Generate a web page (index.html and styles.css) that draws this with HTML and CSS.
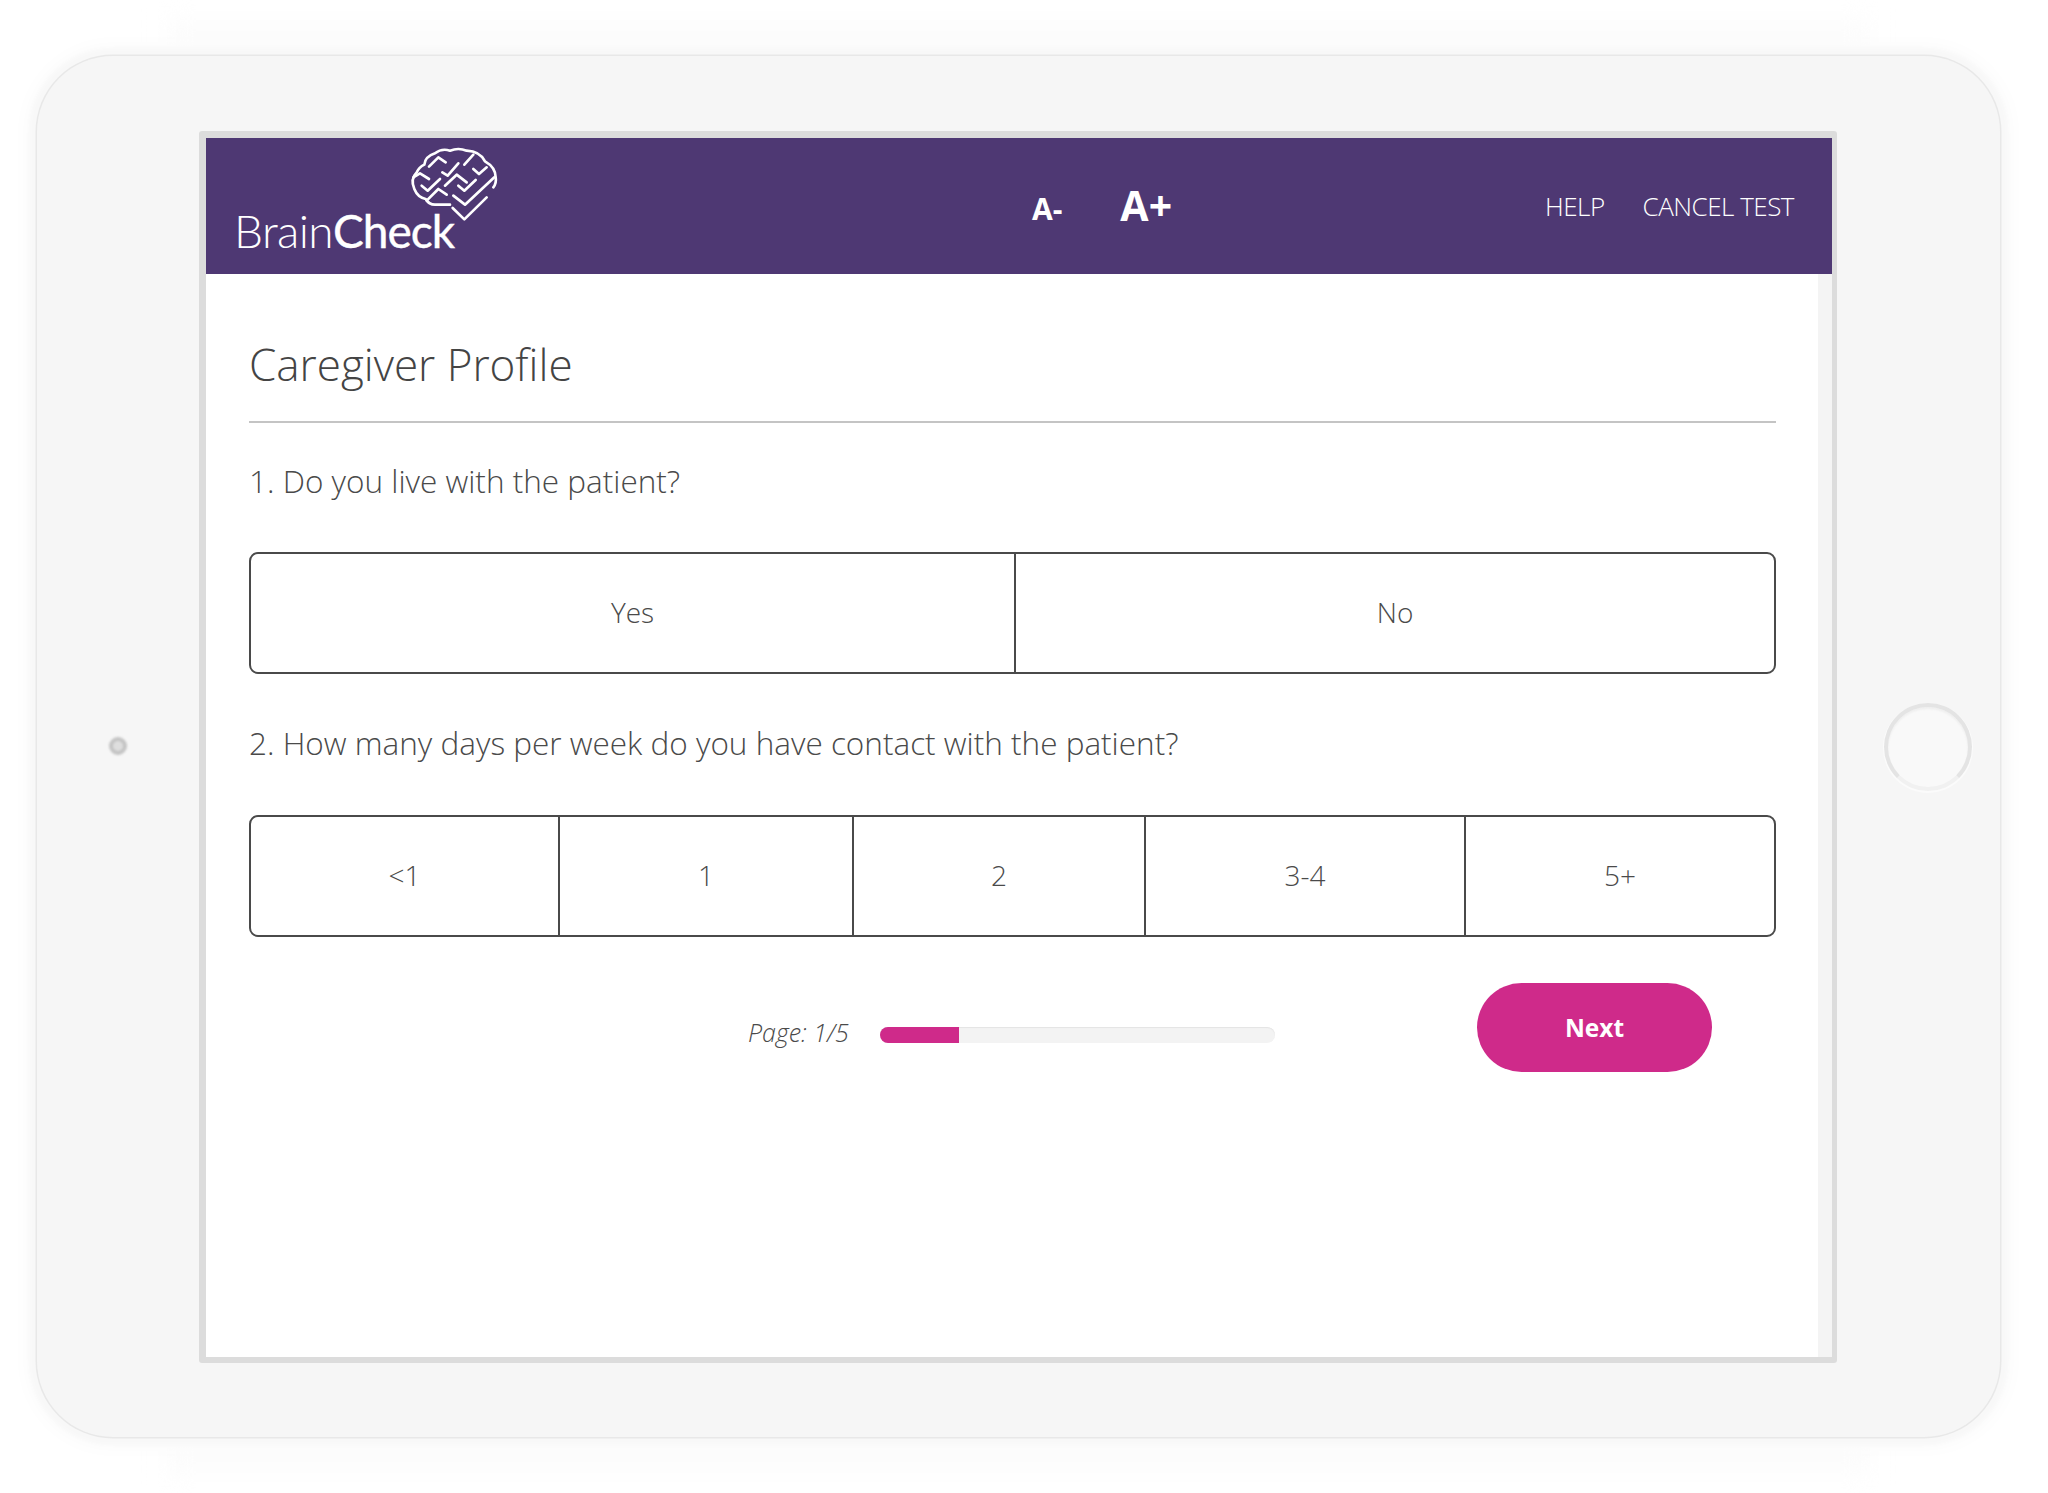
FILE: index.html
```html
<!DOCTYPE html>
<html lang="en">
<head>
    <meta charset="UTF-8">
    <title>BrainCheck - Caregiver Profile</title>
    <link rel="stylesheet" href="styles.css">
</head>
<body>
    <div class="device">
        <div class="camera"></div>
        <div class="screen">
            <div class="page">
                <header class="topbar">
                    <div class="logo">
                        <span class="logo-text">Brain<b>Check</b></span>
                        <svg class="logo-brain" viewBox="0 0 288 240" fill="none" stroke="#fff" stroke-width="8" stroke-linecap="round" stroke-linejoin="round">
                            <path d="M135 182 L90 182 Q72 182 62 165 Q38 160 28 135 Q15 105 35 85 Q42 70 58 62 Q60 38 90 28 Q110 12 135 20 Q160 10 185 20 Q225 22 240 52 Q272 70 272 100 Q275 118 265 130"/>
                            <path d="M145 155 L180 182 L268 100"/>
                            <path d="M143 192 L178 226 L245 160"/>
                            <path d="M72 68 L100 40 L122 55"/>
                            <path d="M112 85 L128 95 L160 58"/>
                            <path d="M205 32 L178 62"/>
                            <path d="M205 75 L222 90 L245 70"/>
                            <path d="M25 100 L45 88 L72 105"/>
                            <path d="M50 125 L68 140 L105 105"/>
                            <path d="M120 125 L155 92 L185 115"/>
                            <path d="M160 125 L178 140 L212 108"/>
                            <path d="M65 170 L100 135 L125 152"/>
                        </svg>
                    </div>
                    <div class="font-controls">
                        <span class="font-small">A-</span>
                        <span class="font-large">A+</span>
                    </div>
                    <nav class="top-links">
                        <span>HELP</span>
                        <span>CANCEL TEST</span>
                    </nav>
                </header>
                <main class="content">
                    <h1>Caregiver Profile</h1>
                    <p class="question">1. Do you live with the patient?</p>
                    <div class="choices two">
                        <div class="choice">Yes</div>
                        <div class="choice">No</div>
                    </div>
                    <p class="question">2. How many days per week do you have contact with the patient?</p>
                    <div class="choices five">
                        <div class="choice">&lt;1</div>
                        <div class="choice">1</div>
                        <div class="choice">2</div>
                        <div class="choice">3-4</div>
                        <div class="choice">5+</div>
                    </div>
                    <div class="footer-row">
                        <span class="page-label">Page: 1/5</span>
                        <div class="progress"><div class="progress-fill"></div></div>
                        <button class="next-btn">Next</button>
                    </div>
                </main>
            </div>
            <div class="page-edge"></div>
        </div>
        <div class="home-button"></div>
    </div>
</body>
</html>
```
FILE: styles.css
```css
html {
    margin: 0;
    background: #fff;
}
body {
    margin: 0;
    width: 2048px;
    height: 1493px;
    padding: 56px 48px 0 37px;
    box-sizing: border-box;
    font-family: "Open Sans", sans-serif;
    overflow: hidden;
}
.device {
    width: 1963px;
    height: 1381px;
    box-sizing: border-box;
    padding: 75px 0 0 162px;
    background: #f6f6f6;
    border-radius: 76px;
    box-shadow: 0 0 0 1.5px #e8e8e8, 0 0 4px 8px #f8f8f8, 0 0 16px 14px #fcfcfc;
    position: relative;
}
.device::before,
.device::after {
    content: "";
    position: absolute;
    z-index: -1;
    left: 130px;
    right: 130px;
    height: 40px;
    background: #fcfcfc;
    filter: blur(12px);
}
.device::before {
    top: -36px;
}
.device::after {
    bottom: -36px;
}
.camera {
    position: absolute;
    left: 72px;
    top: 681px;
    width: 10px;
    height: 10px;
    border: 4px solid #c4c4c4;
    border-radius: 50%;
    background: #dedede;
    filter: blur(1px);
}
.home-button {
    position: absolute;
    left: 1847px;
    top: 647px;
    width: 80px;
    height: 80px;
    border-radius: 50%;
    background: #f9f9f9;
    border: 4px solid #e4e4e4;
    border-bottom-color: #f1f1f1;
    box-shadow: 0 1px 0 1px #fbfbfb, inset 0 2px 2px #efefef;
}
.screen {
    width: 1638px;
    height: 1232px;
    box-sizing: border-box;
    display: flex;
    border: solid #dcdcdc;
    border-width: 7px 5px 6px 7px;
    border-radius: 3px;
    background: #fff;
}
.page {
    flex: 1;
    min-width: 0;
    display: flex;
    flex-direction: column;
    margin-right: -14px;
    position: relative;
}
.page-edge {
    width: 14px;
    background: #f4f4f4;
}
.topbar {
    height: 136px;
    background: #4e3873;
    color: #fff;
    display: flex;
    align-items: center;
    position: relative;
}
.logo {
    width: 824px;
    flex: none;
    height: 135px;
    position: relative;
}
.logo-text {
    position: absolute;
    left: 28px;
    top: 64px;
    font-family: "Lato", sans-serif;
    font-size: 46px;
    font-weight: 300;
    line-height: 56px;
    letter-spacing: -0.6px;
}
.logo-text b {
    font-weight: 400;
    letter-spacing: -1px;
    -webkit-text-stroke: 0.4px #fff;
}
.logo-brain {
    position: absolute;
    left: 199px;
    top: 5px;
    width: 96px;
    height: 80px;
}
.font-controls {
    display: flex;
    align-items: center;
    gap: 58px;
    font-weight: 700;
    width: 515px;
    flex: none;
}
.font-small {
    font-size: 30px;
    margin-left: 2px;
    margin-top: 5px;
}
.font-large {
    font-size: 41px;
    margin-top: -2px;
}
.top-links {
    display: flex;
    gap: 38px;
    font-size: 26px;
    font-weight: 300;
    letter-spacing: -0.5px;
}
.content {
    padding: 0 56px 0 43px;
    color: #4a4a4a;
}
h1 {
    margin: 0;
    height: 149px;
    box-sizing: border-box;
    padding-top: 60px;
    font-size: 44px;
    line-height: 60px;
    font-weight: 300;
    border-bottom: 2px solid #c4c4c4;
    color: #444;
}
.question {
    margin: 0;
    height: 129px;
    box-sizing: border-box;
    padding-top: 38px;
    font-size: 31.5px;
    line-height: 40px;
    font-weight: 300;
}
.choices {
    display: grid;
    height: 122px;
    box-sizing: border-box;
    border: 2px solid #4a4a4a;
    border-radius: 9px;
    font-size: 28px;
    font-weight: 300;
}
.two {
    grid-template-columns: 763px 1fr;
}
.five {
    grid-template-columns: 307px 294px 292px 320px 1fr;
}
.choices + .question {
    height: 141px;
    padding-top: 49px;
}
.choice {
    display: flex;
    align-items: center;
    justify-content: center;
    padding-bottom: 2px;
    border-left: 2px solid #4a4a4a;
}
.choice:first-child {
    border-left: 0;
}
.footer-row {
    display: flex;
    align-items: center;
    margin-top: 46px;
    padding-left: 499px;
}
.page-label {
    width: 132px;
    font-size: 25px;
    font-style: italic;
    font-weight: 300;
    margin-top: 8px;
}
.progress {
    width: 395px;
    height: 16px;
    margin-top: 15px;
    border-radius: 8px;
    background: #f3f3f3;
    box-shadow: inset 0 1px 1px #e4e4e4;
    overflow: hidden;
}
.progress-fill {
    width: 79px;
    height: 100%;
    background: #cf2a8a;
}
.next-btn {
    width: 235px;
    height: 89px;
    margin-left: 202px;
    border: 0;
    border-radius: 45px;
    background: #cf2a8a;
    color: #fff;
    font-family: "Open Sans", sans-serif;
    font-size: 24.5px;
    font-weight: 700;
}
```
